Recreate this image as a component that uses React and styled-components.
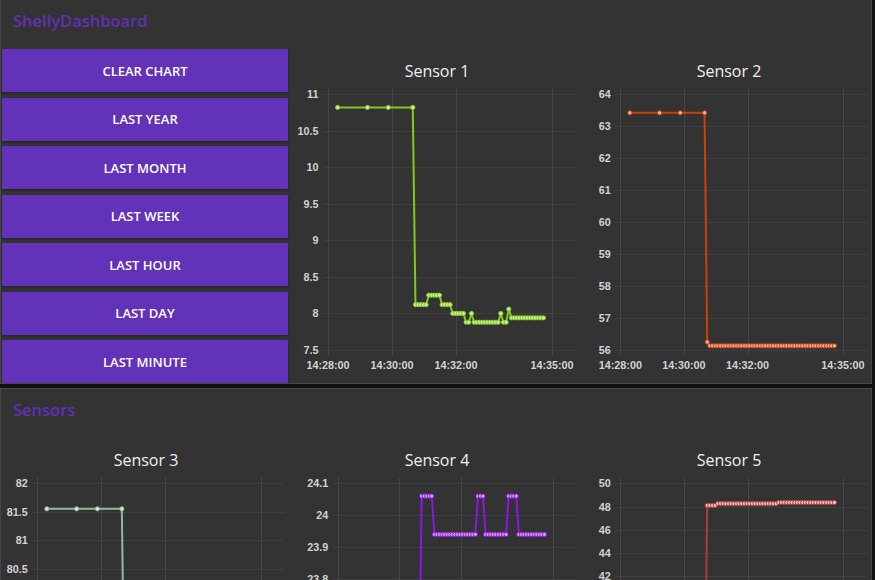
import React from 'react';
import styled, { createGlobalStyle } from 'styled-components';

const GlobalStyle = createGlobalStyle`
  html, body { margin: 0; padding: 0; background: #111111; overflow: hidden; }
  body { font-family: "Open Sans", "Noto Sans", sans-serif; }
  * { box-sizing: border-box; }
`;

const Page = styled.main`
  display: flex;
  flex-direction: column;
  gap: 4px;
  width: 872px;
  margin-top: -1px;
`;

const Group = styled.section`
  background: #333333;
  border: 1px solid #474747;
  overflow: hidden;
`;

const GroupTitle = styled.h2`
  margin: 0;
  height: 49px;
  padding: 9px 12px 0;
  font-size: 16.5px;
  line-height: 24px;
  font-weight: 600;
  color: #6030b8;
`;

const GroupBody = styled.div`
  display: grid;
  grid-template-columns: 289px 290px 290px;
  column-gap: 2px;
  width: 873px;
  height: 334px;
`;

const ButtonColumn = styled.div`
  display: flex;
  flex-direction: column;
  gap: 5.5px;
  padding-left: 1px;
`;

const ActionButton = styled.button`
  width: 286px;
  height: 43px;
  border: none;
  border-radius: 0;
  background: #6232b8;
  color: #ffffff;
  font-family: "Open Sans", "Noto Sans", sans-serif;
  font-size: 13px;
  font-weight: 600;
  text-transform: uppercase;
  display: flex;
  align-items: center;
  justify-content: center;
  box-shadow: 0 1px 2px rgba(0, 0, 0, 0.35);
  cursor: pointer;
`;

const ChartCard = styled.div`
  display: flex;
  flex-direction: column;
  width: 290px;
`;

const ChartTitle = styled.div`
  height: 33px;
  padding-top: 11px;
  text-align: center;
  font-size: 16px;
  line-height: 22px;
  font-weight: 500;
  color: #f0f0f0;
`;

const ChartSvg = styled.svg`
  display: block;
  overflow: visible;
`;

const GridLine = styled.line`
  stroke: ${(p) => (p.$vertical ? '#464646' : '#404040')};
  stroke-width: 1;
  shape-rendering: crispEdges;
`;

const AxisLabel = styled.text`
  font-family: "Liberation Sans", Arial, sans-serif;
  font-size: 10.8px;
  font-weight: 700;
  fill: #d2d2d2;
`;

const SeriesLine = styled.polyline`
  fill: none;
  stroke: ${(p) => p.$color};
  stroke-width: 2;
  stroke-linejoin: round;
`;

const SeriesPoint = styled.circle`
  fill: ${(p) => p.$fill};
  stroke: ${(p) => p.$color};
  stroke-width: 1;
`;

const EARLY = [18, 74, 113, 159];
const denseTimes = Array.from({ length: 49 }, (_, i) => 164 + i * 5);

const makeData = (early, fn) => [
  ...EARLY.map((t) => [t, early]),
  ...denseTimes.map((t) => [t, fn(t)]),
];

const s1 = (t) => {
  if (t === 269 || t === 324) return 8.0;
  if (t === 339) return 8.06;
  if (t < 189) return 8.12;
  if (t < 214) return 8.25;
  if (t < 234) return 8.12;
  if (t < 259) return 8.0;
  if (t < 339) return 7.88;
  return 7.94;
};

const s4 = (t) => {
  if (t < 189) return 24.06;
  if (t < 274) return 23.94;
  if (t < 289) return 24.06;
  if (t < 334) return 23.94;
  if (t < 354) return 24.06;
  return 23.94;
};

const s5 = (t) => {
  if (t < 184) return 48.1;
  if (t < 299) return 48.25;
  return 48.35;
};

const PLOT_TOP = 12.3;
const PLOT_BOTTOM = 268;

const sensorsTop = [
  {
    title: 'Sensor 1',
    plotLeft: 36, plotRight: 284, pxPerMin: 32,
    yMin: 7.5, yMax: 11, yStep: 0.5,
    color: '#80c81e', fill: '#cfeaa6',
    data: makeData(10.82, s1),
  },
  {
    title: 'Sensor 2',
    plotLeft: 36.3, plotRight: 283, pxPerMin: 31.8,
    yMin: 56, yMax: 64, yStep: 1,
    color: '#c9400e', fill: '#f0b6a4',
    data: makeData(63.42, (t) => (t === 164 ? 56.25 : 56.13)),
  },
];

const sensorsBottom = [
  {
    title: 'Sensor 3',
    plotLeft: 36.3, plotRight: 283, pxPerMin: 31.9,
    yMin: 77.5, yMax: 82, yStep: 0.5,
    color: '#8fbb9c', fill: '#d6e8dc',
    data: makeData(81.55, () => 77.9),
  },
  {
    title: 'Sensor 4',
    plotLeft: 45.7, plotRight: 284, pxPerMin: 30.7,
    yMin: 23.3, yMax: 24.1, yStep: 0.1,
    color: '#8a18e4', fill: '#d4a8f6',
    data: makeData(23.42, s4),
  },
  {
    title: 'Sensor 5',
    plotLeft: 36.3, plotRight: 283, pxPerMin: 31.8,
    yMin: 28, yMax: 50, yStep: 2,
    color: '#b23a3c', fill: '#efc4c4',
    data: makeData(30.2, s5),
  },
];

const X_TICKS = [
  { m: 0, label: '14:28:00' },
  { m: 2, label: '14:30:00' },
  { m: 4, label: '14:32:00' },
  { m: 7, label: '14:35:00' },
];

const fmt = (v) => String(parseFloat(v.toFixed(3)));
const crisp = (v) => Math.round(v) + 0.5;

function Chart({ cfg }) {
  const { title, plotLeft, plotRight, pxPerMin, yMin, yMax, yStep, color, fill, data } = cfg;
  const yOf = (v) => PLOT_TOP + ((yMax - v) / (yMax - yMin)) * (PLOT_BOTTOM - PLOT_TOP);
  const xOf = (t) => plotLeft + (t / 60) * pxPerMin;
  const n = Math.round((yMax - yMin) / yStep);
  const yTicks = Array.from({ length: n + 1 }, (_, i) => yMax - i * yStep);
  const pts = data.map(([t, v]) => [xOf(t), yOf(v)]);

  return (
    <ChartCard>
      <ChartTitle>{title}</ChartTitle>
      <ChartSvg width="290" height="301" viewBox="0 0 290 301">
        {yTicks.map((v) => {
          const y = crisp(yOf(v));
          return (
            <g key={`y${v}`}>
              <GridLine x1={plotLeft - 5} x2={plotRight} y1={y} y2={y} />
              <AxisLabel x={plotLeft - 9.5} y={yOf(v)} textAnchor="end" dominantBaseline="central">
                {fmt(v)}
              </AxisLabel>
            </g>
          );
        })}
        {X_TICKS.map(({ m, label }) => {
          const x = crisp(xOf(m * 60));
          return (
            <g key={label}>
              <GridLine $vertical x1={x} x2={x} y1={PLOT_TOP - 5} y2={PLOT_BOTTOM + 5} />
              <AxisLabel x={xOf(m * 60)} y={PLOT_BOTTOM + 14.6} textAnchor="middle" dominantBaseline="central">
                {label}
              </AxisLabel>
            </g>
          );
        })}
        <SeriesLine $color={color} points={pts.map((p) => p.join(',')).join(' ')} />
        {pts.map(([x, y], i) => (
          <SeriesPoint key={i} cx={x} cy={y} r="2.1" $color={color} $fill={fill} />
        ))}
      </ChartSvg>
    </ChartCard>
  );
}

const ACTIONS = ['Clear chart', 'Last year', 'Last month', 'Last week', 'Last hour', 'Last day', 'Last minute'];

export default function App() {
  return (
    <>
      <GlobalStyle />
      <Page>
        <Group>
          <GroupTitle>ShellyDashboard</GroupTitle>
          <GroupBody>
            <ButtonColumn>
              {ACTIONS.map((a) => (
                <ActionButton key={a}>{a}</ActionButton>
              ))}
            </ButtonColumn>
            {sensorsTop.map((c) => (
              <Chart key={c.title} cfg={c} />
            ))}
          </GroupBody>
        </Group>
        <Group>
          <GroupTitle>Sensors</GroupTitle>
          <GroupBody>
            {sensorsBottom.map((c) => (
              <Chart key={c.title} cfg={c} />
            ))}
          </GroupBody>
        </Group>
      </Page>
    </>
  );
}
